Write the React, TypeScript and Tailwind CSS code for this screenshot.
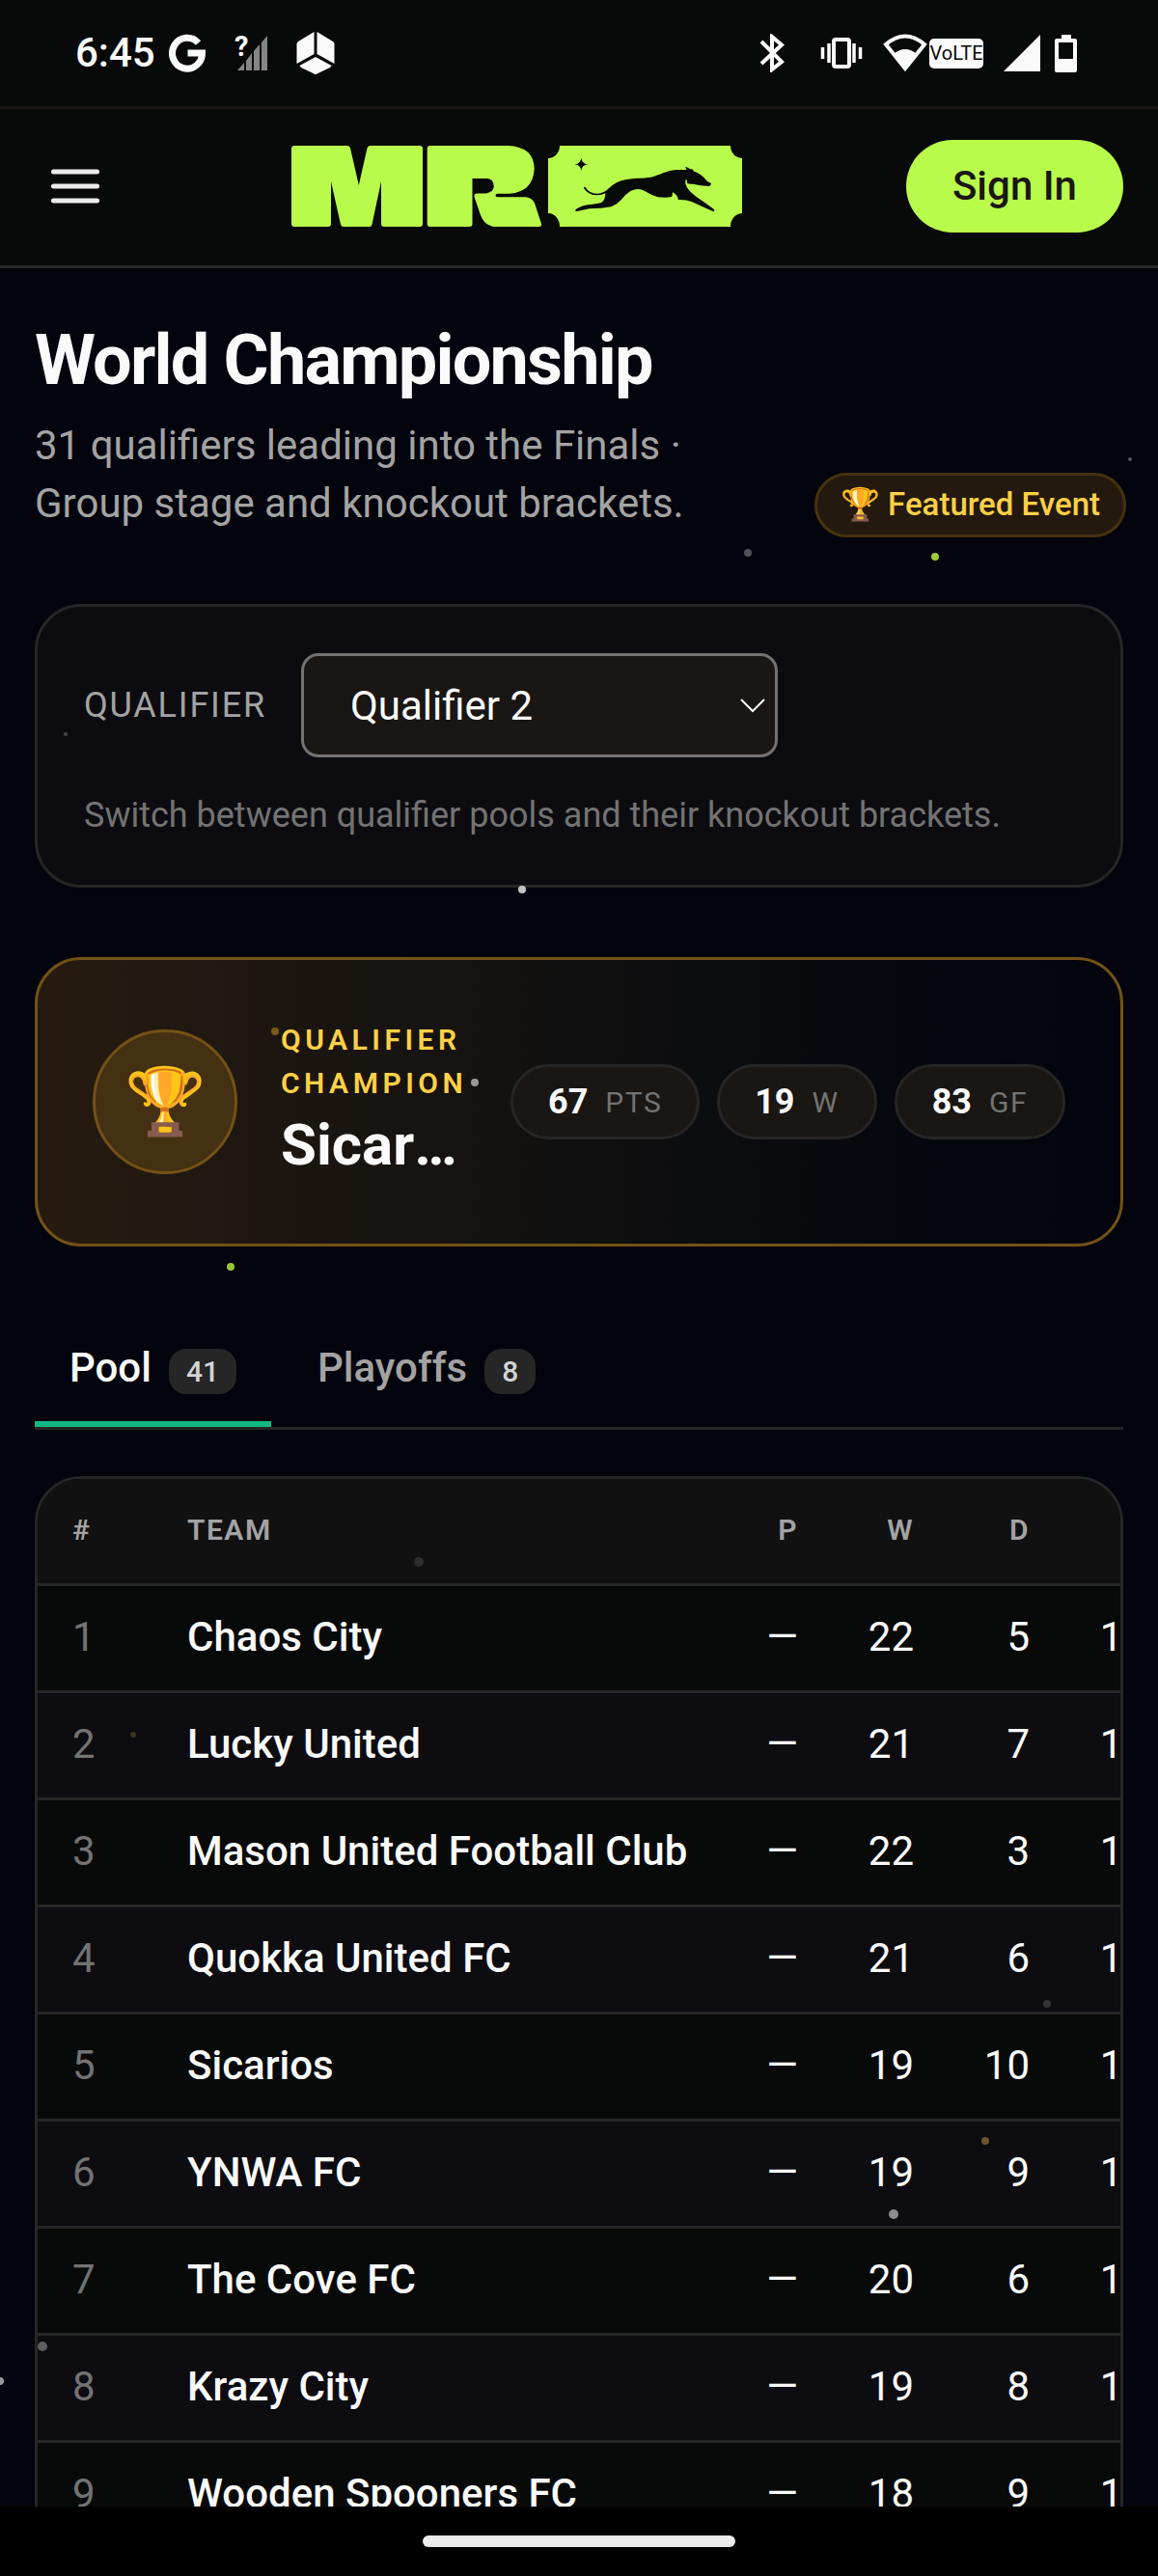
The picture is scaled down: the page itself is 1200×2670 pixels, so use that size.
import { useState } from "react";

const teams = [
  { name: "Chaos City", w: 22, d: 5, l: 13 },
  { name: "Lucky United", w: 21, d: 7, l: 12 },
  { name: "Mason United Football Club", w: 22, d: 3, l: 15 },
  { name: "Quokka United FC", w: 21, d: 6, l: 13 },
  { name: "Sicarios", w: 19, d: 10, l: 11 },
  { name: "YNWA FC", w: 19, d: 9, l: 12 },
  { name: "The Cove FC", w: 20, d: 6, l: 14 },
  { name: "Krazy City", w: 19, d: 8, l: 13 },
  { name: "Wooden Spooners FC", w: 18, d: 9, l: 13 },
];

const stats = [
  { value: 67, label: "PTS" },
  { value: 19, label: "W" },
  { value: 83, label: "GF" },
];

const particles: [number, number, number, string][] = [
  [1171, 476, 2, "#55555a"],
  [775, 573, 4, "#515156"],
  [969, 577, 4, "#9ccb3e"],
  [68, 761, 2, "#4a4a4a"],
  [541, 922, 4, "#c4c4c6"],
  [285, 1069, 4, "#7a5a18"],
  [492, 1122, 4, "#9a9a9a"],
  [239, 1313, 4, "#98c53c"],
  [434, 1619, 5, "#2e2e2f"],
  [138, 1798, 3, "#403420"],
  [1085, 2077, 4, "#333336"],
  [1021, 2219, 4, "#6d5428"],
  [926, 2295, 5, "#8d8d8f"],
  [44, 2432, 5, "#5e5e60"],
  [0, 2468, 4, "#9a9a9c"],
];

function Particles() {
  return (
    <svg className="pointer-events-none absolute top-0 left-0 z-10" width="1200" height="2598" aria-hidden="true">
      {particles.map(([x, y, r, fill]) => (
        <circle key={`${x}-${y}`} cx={x} cy={y} r={r} fill={fill} />
      ))}
    </svg>
  );
}

function StatusBar() {
  return (
    <div className="flex h-[110px] shrink-0 items-center justify-between pr-[84px] pl-[78px] text-[#fafafa]">
      <div className="flex items-center">
        <span className="text-[42px] leading-[60px] font-medium">6:45</span>
        <svg className="ml-[14px]" width="38" height="40" viewBox="0 0 38 40" fill="none" stroke="currentColor" strokeWidth="7">
          <path d="M30.5 9.5A15.5 16 0 1 0 34.5 20H19.5" />
        </svg>
        <svg className="ml-[28px]" width="40" height="60" viewBox="-2 -10 40 60">
          <path d="M3 38 10 30v8zM12 28l6-8v18h-6zM20 18l6-7v27h-6zM28 9l6-7v36h-6z" fill="#858585" />
          <text x="0" y="23" fontSize="29" fontWeight="700" fill="currentColor">?</text>
        </svg>
        <svg className="ml-[26px]" width="40" height="46" viewBox="0 0 40 46" fill="currentColor">
          <path d="M18.500 1V24L.5 34V13.500Q.5 12 2 11ZM21.500 1V24L39.500 34V13.500Q39.500 12 38 11ZM20 27 36.500 36Q36 37 35 38L21.500 44.500Q20 45.500 18.500 44.500L5 38Q4 37 3.500 36Z" />
        </svg>
      </div>
      <div className="flex items-center">
        <svg width="26" height="40" viewBox="0 0 26 40" fill="none" stroke="currentColor" strokeWidth="4">
          <path d="M2 8 23 29 13 37V3L23 11.500 2 31" />
        </svg>
        <svg className="ml-[37px]" width="44" height="32" viewBox="0 0 44 32" fill="none" stroke="currentColor">
          <rect x="14" y="2" width="16" height="28" rx="2" strokeWidth="4" />
          <path d="M9 6v20M35 6v20M2.500 10v12M41.500 10v12" strokeWidth="3.500" />
        </svg>
        <svg className="ml-[21px]" width="46" height="40" viewBox="0 0 46 40">
          <path d="M3 11Q23-6 43 11L23 36Z" fill="none" stroke="currentColor" strokeWidth="4" />
          <path d="M11 21Q23 11 35 21L23 37Z" fill="currentColor" />
        </svg>
        <span className="ml-[2px] flex h-[31px] w-[56px] items-center justify-center rounded-[5px] bg-[#fafafa] text-[20px] leading-[30px] text-[#080a09]">
          VoLTE
        </span>
        <svg className="ml-[21px]" width="38" height="38" viewBox="0 0 38 38">
          <path d="M38 0v38H0z" fill="currentColor" />
        </svg>
        <svg className="ml-[15px]" width="23" height="39" viewBox="0 0 23 39">
          <path fillRule="evenodd" d="M7 0h10v4h4q2 0 2 2v31q0 2-2 2H2q-2 0-2-2V6q0-2 2-2h5zM4 8v17h15V8z" fill="currentColor" />
        </svg>
      </div>
    </div>
  );
}

function Logo() {
  return (
    <svg width="467" height="84" viewBox="0 0 467 84" role="img" aria-label="MR">
      <g fill="#b9fb4b">
        <path d="M3 0H58Q60.500 0 61 2.500L69.800 41 78.500 2.500Q79 0 81.500 0H133Q136 0 136 3V81Q136 84 133 84H96Q93 84 93 81V37L83.500 81.500Q83 84 80.500 84H54Q51.500 84 51 81.500L41 37V81Q41 84 38 84H3Q0 84 0 81V3Q0 0 3 0Z" />
        <path d="M143.700 0H224Q251.700 1 251.700 24.500 250 48 226 49.700H213.500Q211.500 50 211.500 51.500 211.500 53.300 213.500 53.300H243Q250 54 252.500 61L259 81Q259.300 84 257 84H211Q200 83 196 72L189.500 53Q189 49.700 192.500 49.500H202Q209.700 48 209.700 41.500 209 34.500 203 34H187.500V81Q187.500 84 184.500 84H143.700Q140.700 84 140.700 81V3Q140.700 0 143.700 0Z" />
        <path d="M278 0H455A12 13 0 0 0 467 13V70A12 14 0 0 0 455 84H278A12 14 0 0 0 266 70V13A12 13 0 0 0 278 0Z" />
      </g>
      <g fill="#080a09" transform="translate(258 -11) scale(.33333)">
        <path d="M127 71Q129 89 147 91 129 93 127 111 125 93 107 91 125 89 127 71Z" />
        <path d="M141 163Q150 182 177 182 197 181 209 169 232 143 268 138C300 133 330 135 352 129 380 120 395 109 428 108L455 108 450 99Q461 101 464 105L475 107 475 112C496 119 508 131 519 144L531 150Q531 158 524 159 495 157 475 152 459 152 456 149 457 142 453 136 450 145 451 152 455 165 467 177 484 193 510 209L540 231Q544 235 538 238 503 223 472 208 452 200 429 201 427 188 414 179 402 172 393 163 402 162 411 176 411 188 408 192 390 196 366 193 345 187 324 174 305 162 280 174 266 183 252 200 238 216 220 223 190 229 152 229L114 237Q106 237 110 231 130 218 155 216 180 213 190 210 202 202 202 181 190 188 173 187 147 185 135 165 136 159 141 163Z" />
      </g>
    </svg>
  );
}

function Header() {
  return (
    <header className="flex h-[168px] shrink-0 items-center justify-between border-t-3 border-b-3 border-t-[#1a1613] border-b-[#262626] pr-9 pb-[2px] pl-[52px]">
      <button type="button" aria-label="Menu" className="text-[#ebebeb]">
        <svg width="52" height="40" viewBox="0 0 52 40" stroke="currentColor" strokeWidth="5" strokeLinecap="round">
          <path d="M3.500 5H48.500M3.500 20H48.500M3.500 35H48.500" />
        </svg>
      </button>
      <a href="#home" className="ml-7">
        <Logo />
      </a>
      <button type="button" className="rounded-full bg-[#b9fb4b] px-12 py-[18px] text-[42px] leading-[60px] font-medium text-[#1a1613]">
        Sign In
      </button>
    </header>
  );
}

function SelectorCard() {
  return (
    <section className="mt-[69px] flex flex-col gap-9 rounded-[48px] border-3 border-[#262626] bg-[#0c0c10] px-12 py-12">
      <div className="flex items-center gap-9">
        <label htmlFor="qualifier" className="text-[36px] leading-[48px] tracking-wider text-[#a3a3a3] uppercase">
          Qualifier
        </label>
        <div className="relative w-[494px]">
          <select
            id="qualifier"
            defaultValue="2"
            className="h-[108px] w-full appearance-none rounded-[18px] border-3 border-[#737373] bg-[#191613] px-12 text-[42px] text-[#fafafa]"
          >
            <option value="1">Qualifier 1</option>
            <option value="2">Qualifier 2</option>
            <option value="3">Qualifier 3</option>
          </select>
          <svg className="pointer-events-none absolute top-[46px] right-[12px]" width="28" height="18" viewBox="0 0 28 18" fill="none" stroke="#fafafa" strokeWidth="2">
            <path d="M2 2 14 14 26 2" />
          </svg>
        </div>
      </div>
      <p className="text-[36px] leading-[48px] text-[#737373]">Switch between qualifier pools and their knockout brackets.</p>
    </section>
  );
}

function ChampionCard() {
  return (
    <section className="mt-[72px] flex h-[300px] items-center gap-[45px] rounded-[48px] border-3 border-[#735217] bg-linear-to-r from-[#271b10] via-[#101010] to-[#03040d] px-[57px]">
      <div className="flex size-[150px] shrink-0 items-center justify-center rounded-full border-3 border-[#735217] bg-[#443012] text-[68px] leading-[84px]">
        🏆
      </div>
      <div className="min-w-0 flex-1">
        <p className="text-[30px] leading-[45px] font-semibold tracking-[0.15em] text-[#fdd147] uppercase">Qualifier Champion</p>
        <p className="truncate text-[60px] leading-[84px] font-bold text-[#fafafa]">Sicarios</p>
      </div>
      <dl className="flex shrink-0 gap-[18px]">
        {stats.map((s) => (
          <div key={s.label} className="flex h-[78px] flex-row-reverse items-center gap-[18px] rounded-full border-3 border-[#262626] bg-[#191613] px-9">
            <dt className="text-[30px] leading-[45px] tracking-wider text-[#737373]">{s.label}</dt>
            <dd className="text-[36px] leading-[48px] font-bold text-[#fafafa]">{s.value}</dd>
          </div>
        ))}
      </dl>
    </section>
  );
}

function Tabs() {
  const [active, setActive] = useState("Pool");
  const tabs = [
    { name: "Pool", count: 41 },
    { name: "Playoffs", count: 8 },
  ];
  return (
    <div role="tablist" className="mt-[72px] flex gap-3 border-b-3 border-[#262626]">
      {tabs.map((t) => (
        <button
          key={t.name}
          type="button"
          role="tab"
          aria-selected={active === t.name}
          onClick={() => setActive(t.name)}
          className={
            "flex items-baseline gap-[18px] border-b-6 px-9 pt-6 pb-[25px] text-[42px] leading-[60px] font-medium " +
            (active === t.name ? "border-[#10b981] text-[#fafafa]" : "border-transparent text-[#a3a3a3]")
          }
        >
          {t.name}
          <span className="rounded-[18px] bg-[#262626] px-[18px] text-[30px] leading-[47px] font-medium text-[#d4d4d4]">{t.count}</span>
        </button>
      ))}
    </div>
  );
}

function Standings() {
  return (
    <div className="mt-12 overflow-hidden rounded-[48px] border-3 border-[#262626]">
      <table className="w-[1184px] min-w-full table-fixed border-separate border-spacing-0">
        <colgroup>
          <col className="w-[119px]" />
          <col />
          <col className="w-[120px]" />
          <col className="w-[120px]" />
          <col className="w-[120px]" />
          <col className="w-[120px]" />
        </colgroup>
        <thead>
          <tr className="h-[111px] bg-[#111111] text-[30px] leading-[45px] tracking-wider text-[#a3a3a3] [&>th]:border-b-3 [&>th]:border-[#262626] [&>th]:px-9 [&>th]:pb-[3px] [&>th]:font-semibold">
            <th scope="col" className="text-left">#</th>
            <th scope="col" className="text-left">TEAM</th>
            <th scope="col" className="text-right">P</th>
            <th scope="col" className="text-right">W</th>
            <th scope="col" className="text-right">D</th>
            <th scope="col" className="text-right">L</th>
          </tr>
        </thead>
        <tbody>
          {teams.map((t, i) => (
            <tr
              key={t.name}
              className="h-[111px] text-[42px] leading-[60px] text-[#fafafa] odd:bg-[#080a09] even:bg-[#0d0c11] [&>td]:border-b-3 [&>td]:border-[#262626] [&>td]:px-9 [&>td]:pb-[3px]"
            >
              <td className="text-[#737373]">{i + 1}</td>
              <td className="font-medium whitespace-nowrap">{t.name}</td>
              <td className="text-right">—</td>
              <td className="text-right">{t.w}</td>
              <td className="text-right">{t.d}</td>
              <td className="text-right">{t.l}</td>
            </tr>
          ))}
        </tbody>
      </table>
    </div>
  );
}

export default function App() {
  return (
    <div className="relative flex h-screen flex-col overflow-hidden bg-[#080a09] font-[Roboto,sans-serif]">
      <StatusBar />
      <Header />
      <main className="min-h-0 flex-1 overflow-hidden bg-[#03040d] px-9 pt-12">
        <div className="flex items-end justify-between gap-6">
          <div className="pb-[5px]">
            <h1 className="text-[72px] leading-[96px] font-bold tracking-tight text-[#fafafa]">World Championship</h1>
            <p className="mt-[10px] max-w-[700px] text-[42px] leading-[60px] text-[#a3a3a3]">
              31 qualifiers leading into the Finals · Group stage and knockout brackets.
            </p>
          </div>
          <span className="-mr-[3px] shrink-0 rounded-full border-3 border-[#46320f] bg-[#24190e] px-6 pt-[5px] pb-[7px] text-[33px] leading-[49px] font-medium text-[#fdd147]">
            🏆 Featured Event
          </span>
        </div>
        <SelectorCard />
        <ChampionCard />
        <Tabs />
        <Standings />
      </main>
      <Particles />
      <div className="z-20 flex h-[72px] shrink-0 items-center justify-center bg-black">
        <div className="h-[12px] w-[324px] rounded-full bg-[#ebebeb]" />
      </div>
    </div>
  );
}
